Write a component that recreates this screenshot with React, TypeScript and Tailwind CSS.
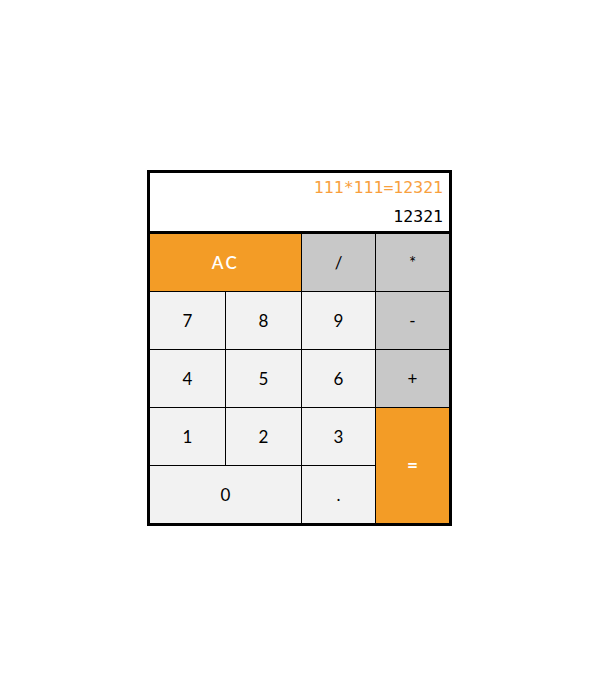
import React from 'react';

type Key = {
  label: string;
  className: string;
};

const keys: Key[] = [
  { label: 'AC', className: 'col-span-2 bg-[#f39c26] text-white tracking-[0.15em] font-semibold' },
  { label: '/', className: 'bg-[#c8c8c8] text-black' },
  { label: '*', className: 'bg-[#c8c8c8] text-black' },
  { label: '7', className: 'bg-[#f2f2f2] text-black' },
  { label: '8', className: 'bg-[#f2f2f2] text-black' },
  { label: '9', className: 'bg-[#f2f2f2] text-black' },
  { label: '-', className: 'bg-[#c8c8c8] text-black' },
  { label: '4', className: 'bg-[#f2f2f2] text-black' },
  { label: '5', className: 'bg-[#f2f2f2] text-black' },
  { label: '6', className: 'bg-[#f2f2f2] text-black' },
  { label: '+', className: 'bg-[#c8c8c8] text-black' },
  { label: '1', className: 'bg-[#f2f2f2] text-black' },
  { label: '2', className: 'bg-[#f2f2f2] text-black' },
  { label: '3', className: 'bg-[#f2f2f2] text-black' },
  { label: '=', className: 'row-span-2 bg-[#f39c26] text-white font-bold text-[19px]' },
  { label: '0', className: 'col-span-2 bg-[#f2f2f2] text-black' },
  { label: '.', className: 'bg-[#f2f2f2] text-black' },
];

export default function App() {
  return (
    <div className="min-h-[700px] w-full bg-white flex items-start justify-center pt-[170px] pr-px">
      <div className="w-[305px] border-[3px] border-black bg-black">
        <div className="h-[58px] bg-white flex flex-col items-end justify-center pr-[6px] mb-[3px] font-['DejaVu_Sans_Mono',monospace] text-[16.5px]">
          <div className="h-[29px] leading-[29px] text-[#f8a03e]">111*111=12321</div>
          <div className="h-[29px] leading-[29px] text-black">12321</div>
        </div>
        <div className="grid grid-cols-[75px_75px_73px_73px] auto-rows-[57px] gap-px">
          {keys.map((k) => (
            <button
              key={k.label}
              className={`flex items-center justify-center font-['Lato',sans-serif] text-[17px] ${k.className}`}
            >
              {k.label}
            </button>
          ))}
        </div>
      </div>
    </div>
  );
}
